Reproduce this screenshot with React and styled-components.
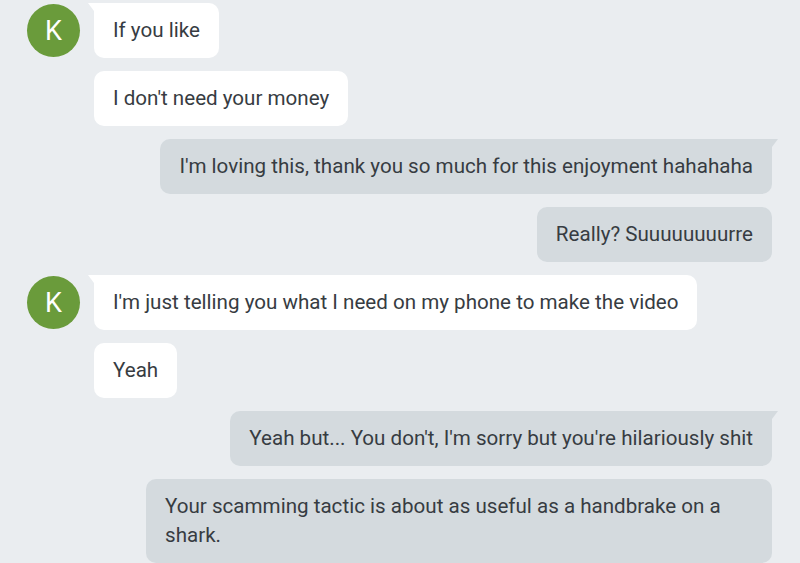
import React from "react";
import styled, { createGlobalStyle } from "styled-components";

const Global = createGlobalStyle`
  html, body { margin: 0; padding: 0; background: #eaedf0; }
  body { font-family: Roboto, "Noto Sans", "Liberation Sans", sans-serif; }
`;

const Thread = styled.div`
  width: 800px;
  height: 563px;
  overflow: hidden;
  box-sizing: border-box;
  padding: 3px 28px 0 27px;
  display: flex;
  flex-direction: column;
  gap: 13px;
  background: #eaedf0;
`;

const Row = styled.div`
  display: flex;
  align-items: flex-start;
  justify-content: ${(p) => (p.$sent ? "flex-end" : "flex-start")};
  padding-left: ${(p) => (p.$sent ? "0" : "67px")};
  position: relative;
`;

const Avatar = styled.div`
  position: absolute;
  left: 0;
  top: 1px;
  width: 53px;
  height: 53px;
  border-radius: 50%;
  background: #6a9b3b;
  color: #fff;
  font-size: 27px;
  display: flex;
  align-items: center;
  justify-content: center;
`;

const Bubble = styled.div`
  position: relative;
  box-sizing: border-box;
  max-width: 626px;
  padding: 13px 19px 13px;
  font-size: 20.6px;
  line-height: 29px;
  color: #373c42;
  background: ${(p) => (p.$sent ? "#d4dade" : "#ffffff")};
  border-radius: 10px;
  ${(p) =>
    p.$tail &&
    (p.$sent
      ? "border-top-right-radius: 0;"
      : "border-top-left-radius: 0;")}
`;

const Tail = styled.svg`
  position: absolute;
  top: 0;
  ${(p) => (p.$sent ? "right: -6px;" : "left: -6px;")}
  width: 6px;
  height: 8px;
`;

const messages = [
  { sent: false, avatar: true, text: "If you like" },
  { sent: false, text: "I don't need your money" },
  { sent: true, tail: true, text: "I'm loving this, thank you so much for this enjoyment hahahaha" },
  { sent: true, text: "Really? Suuuuuuuurre" },
  { sent: false, avatar: true, text: "I'm just telling you what I need on my phone to make the video" },
  { sent: false, text: "Yeah" },
  { sent: true, tail: true, text: "Yeah but... You don't, I'm sorry but you're hilariously shit" },
  { sent: true, text: "Your scamming tactic is about as useful as a handbrake on a shark." },
];

export default function App() {
  return (
    <>
      <Global />
      <Thread>
        {messages.map((m, i) => {
          const tail = m.tail || m.avatar;
          return (
            <Row key={i} $sent={m.sent}>
              {m.avatar && <Avatar>K</Avatar>}
              <Bubble $sent={m.sent} $tail={tail}>
                {tail && (
                  <Tail $sent={m.sent} viewBox="0 0 6 8">
                    <path
                      d={m.sent ? "M0 0 L6 0 L0 8 Z" : "M6 0 L0 0 L6 8 Z"}
                      fill={m.sent ? "#d4dade" : "#ffffff"}
                    />
                  </Tail>
                )}
                {m.text}
              </Bubble>
            </Row>
          );
        })}
      </Thread>
    </>
  );
}
